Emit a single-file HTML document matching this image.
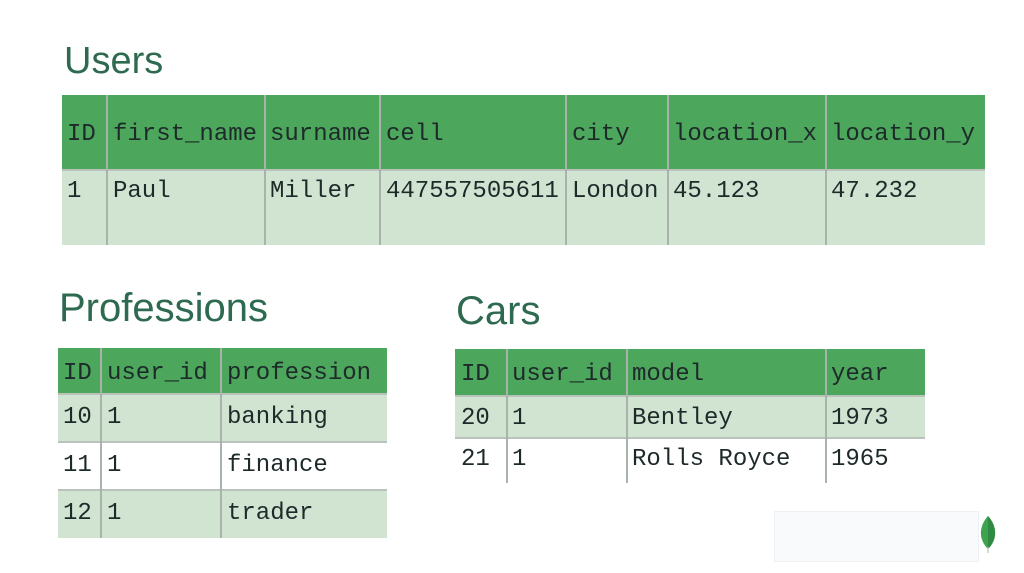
<!DOCTYPE html>
<html><head><style>
body{margin:0;width:1024px;height:573px;background:#fff;position:relative;overflow:hidden;font-family:"Liberation Mono",monospace;}
.t{position:absolute;font-family:"DejaVu Sans ExtraLight","Liberation Sans",sans-serif;color:#2e6a4f;font-weight:200;}
.b{position:absolute;}
.c{position:absolute;font-size:24px;color:#1e2a2a;line-height:1;white-space:nowrap;margin-top:3px;}
.v{position:absolute;width:2px;background:#a9b2ab;}
.h{position:absolute;height:2px;background:#b9c2bb;}
</style></head><body>
<div class="t" style="left:64px;top:40px;font-size:38px;">Users</div>
<div class="b" style="left:62px;top:95px;width:923px;height:75px;background:#4ca65c"></div>
<div class="b" style="left:62px;top:171px;width:923px;height:74px;background:#d0e4d1"></div>
<div class="h" style="left:62px;top:169px;width:923px;"></div>
<div class="v" style="left:106px;top:95px;height:150px"></div>
<div class="v" style="left:264px;top:95px;height:150px"></div>
<div class="v" style="left:379px;top:95px;height:150px"></div>
<div class="v" style="left:565px;top:95px;height:150px"></div>
<div class="v" style="left:667px;top:95px;height:150px"></div>
<div class="v" style="left:825px;top:95px;height:150px"></div>
<div class="c" style="left:67px;top:120px">ID</div>
<div class="c" style="left:113px;top:120px">first_name</div>
<div class="c" style="left:270px;top:120px">surname</div>
<div class="c" style="left:386px;top:120px">cell</div>
<div class="c" style="left:572px;top:120px">city</div>
<div class="c" style="left:673px;top:120px">location_x</div>
<div class="c" style="left:831px;top:120px">location_y</div>
<div class="c" style="left:67px;top:177px">1</div>
<div class="c" style="left:113px;top:177px">Paul</div>
<div class="c" style="left:270px;top:177px">Miller</div>
<div class="c" style="left:386px;top:177px">447557505611</div>
<div class="c" style="left:572px;top:177px">London</div>
<div class="c" style="left:673px;top:177px">45.123</div>
<div class="c" style="left:831px;top:177px">47.232</div>

<div class="t" style="left:59px;top:286px;font-size:40px;">Professions</div>
<div class="b" style="left:58px;top:348px;width:329px;height:46px;background:#4ca65c"></div>
<div class="b" style="left:58px;top:395px;width:329px;height:47px;background:#d0e4d1"></div>
<div class="b" style="left:58px;top:491px;width:329px;height:47px;background:#d0e4d1"></div>
<div class="h" style="left:58px;top:393px;width:329px;"></div>
<div class="h" style="left:58px;top:441px;width:329px;"></div>
<div class="h" style="left:58px;top:489px;width:329px;"></div>
<div class="v" style="left:100px;top:348px;height:190px"></div>
<div class="v" style="left:220px;top:348px;height:190px"></div>
<div class="c" style="left:63px;top:359px">ID</div>
<div class="c" style="left:107px;top:359px">user_id</div>
<div class="c" style="left:227px;top:359px">profession</div>
<div class="c" style="left:63px;top:403px">10</div><div class="c" style="left:107px;top:403px">1</div><div class="c" style="left:227px;top:403px">banking</div>
<div class="c" style="left:63px;top:451px">11</div><div class="c" style="left:107px;top:451px">1</div><div class="c" style="left:227px;top:451px">finance</div>
<div class="c" style="left:63px;top:499px">12</div><div class="c" style="left:107px;top:499px">1</div><div class="c" style="left:227px;top:499px">trader</div>

<div class="t" style="left:456px;top:289px;font-size:40px;">Cars</div>
<div class="b" style="left:455px;top:349px;width:470px;height:46px;background:#4ca65c"></div>
<div class="b" style="left:455px;top:396px;width:470px;height:41px;background:#d0e4d1"></div>
<div class="h" style="left:455px;top:395px;width:470px;"></div>
<div class="h" style="left:455px;top:437px;width:470px;"></div>
<div class="v" style="left:506px;top:349px;height:134px"></div>
<div class="v" style="left:626px;top:349px;height:134px"></div>
<div class="v" style="left:825px;top:349px;height:134px"></div>
<div class="c" style="left:461px;top:360px">ID</div>
<div class="c" style="left:512px;top:360px">user_id</div>
<div class="c" style="left:632px;top:360px">model</div>
<div class="c" style="left:831px;top:360px">year</div>
<div class="c" style="left:461px;top:404px">20</div><div class="c" style="left:512px;top:404px">1</div><div class="c" style="left:632px;top:404px">Bentley</div><div class="c" style="left:831px;top:404px">1973</div>
<div class="c" style="left:461px;top:445px">21</div><div class="c" style="left:512px;top:445px">1</div><div class="c" style="left:632px;top:445px">Rolls Royce</div><div class="c" style="left:831px;top:445px">1965</div>

<div class="b" style="left:774px;top:511px;width:203px;height:49px;background:#f8fafc;border:1px solid #eef1f3"></div>
<svg class="b" style="left:977px;top:515px" width="22" height="40" viewBox="0 0 22 40">
<path d="M11 1 C2 11 1 24 11 34 C21 24 20 11 11 1Z" fill="#3fa24f"/>
<path d="M11 1 C20 11 21 24 11 34Z" fill="#2f8a43"/>
<line x1="11" y1="32" x2="11" y2="38" stroke="#b7c6b0" stroke-width="1.2"/>
</svg>
</body></html>
